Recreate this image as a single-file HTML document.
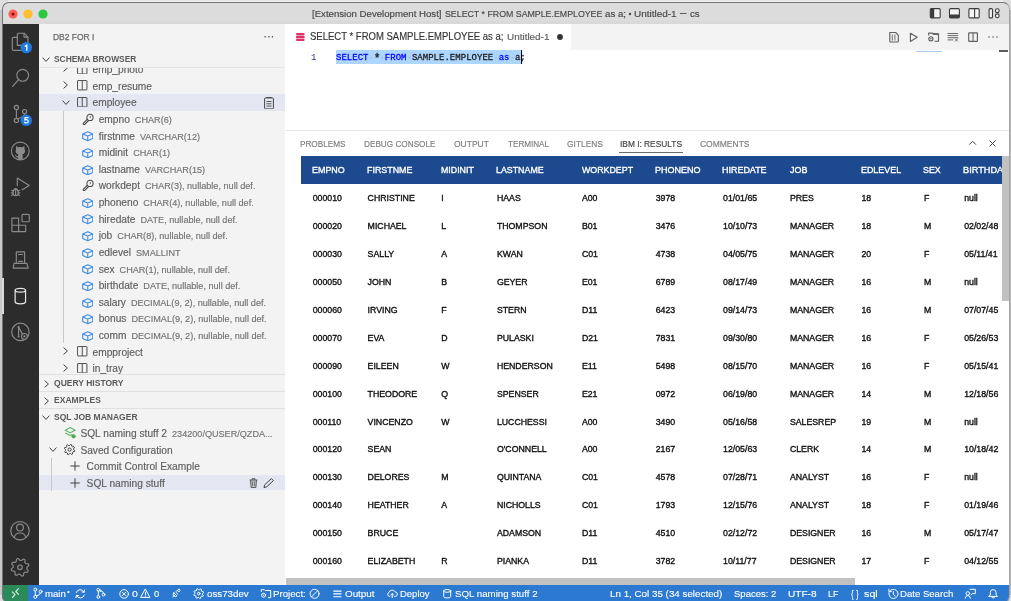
<!DOCTYPE html><html><head><meta charset="utf-8"><style>
html,body{margin:0;padding:0;width:1011px;height:601px;overflow:hidden;background:#e8e8e8;}
.r{position:absolute;}
.t{position:absolute;line-height:0;white-space:nowrap;-webkit-text-stroke:0.15px currentColor;}
body{-webkit-font-smoothing:antialiased;}
#root{position:absolute;left:0;top:0;width:1011px;height:601px;will-change:transform;}
</style></head><body>
<div id="root"><div class="r" style="left:2.00px;top:2.00px;width:1007.30px;height:21.50px;background:#dcdcdc;"></div>
<div class="r" style="left:2.00px;top:20.50px;width:1007.30px;height:3.00px;background:#d9d9d8;"></div>
<svg class="r" style="left:7.80px;top:8.80px;" width="10" height="10" viewBox="0 0 10 10"><circle cx="5" cy="5" r="4.6" fill="#fe5f57"/><circle cx="5" cy="5" r="1.6" fill="#8a0c0c"/></svg>
<svg class="r" style="left:23.00px;top:8.80px;" width="10" height="10" viewBox="0 0 10 10"><circle cx="5" cy="5" r="4.6" fill="#febc2e"/></svg>
<svg class="r" style="left:38.20px;top:8.80px;" width="10" height="10" viewBox="0 0 10 10"><circle cx="5" cy="5" r="4.6" fill="#28c840"/></svg>
<div class="t" style="left:312.33px;top:13.64px;font-size:9.7px;color:#464646;font-weight:normal;font-family:'Liberation Sans', sans-serif;-webkit-text-stroke:0.15px currentColor;transform:scaleX(0.9937);transform-origin:0 0;">[Extension Development Host]</div>
<div class="t" style="left:444.70px;top:13.64px;font-size:9.7px;color:#464646;font-weight:normal;font-family:'Liberation Sans', sans-serif;-webkit-text-stroke:0.15px currentColor;transform:scaleX(0.9087);transform-origin:0 0;">SELECT * FROM SAMPLE.EMPLOYEE</div>
<div class="t" style="left:605.11px;top:13.64px;font-size:9.7px;color:#464646;font-weight:normal;font-family:'Liberation Sans', sans-serif;-webkit-text-stroke:0.15px currentColor;transform:scaleX(1.0006);transform-origin:0 0;">as a;</div>
<svg class="r" style="left:627.70px;top:11.80px;" width="4" height="4" viewBox="0 0 4 4"><circle cx="2" cy="2" r="1.2" fill="#4a4a4a"/></svg>
<div class="t" style="left:634.15px;top:13.64px;font-size:9.7px;color:#464646;font-weight:normal;font-family:'Liberation Sans', sans-serif;-webkit-text-stroke:0.15px currentColor;transform:scaleX(1.0284);transform-origin:0 0;">Untitled-1</div>
<div class="t" style="left:679.80px;top:13.24px;font-size:9.7px;color:#464646;font-weight:normal;font-family:'Liberation Sans', sans-serif;-webkit-text-stroke:0.15px currentColor;transform:scaleX(0.6701);transform-origin:0 0;">—</div>
<div class="t" style="left:690.12px;top:13.64px;font-size:9.7px;color:#464646;font-weight:normal;font-family:'Liberation Sans', sans-serif;-webkit-text-stroke:0.15px currentColor;transform:scaleX(0.9919);transform-origin:0 0;">cs</div>
<svg class="r" style="left:927px;top:6px;" width="16" height="15" viewBox="927 6 16 15"><rect x="930.3" y="8.6" width="9.9" height="9.3" rx="1.1" fill="#f4f4f4" stroke="#3c3c3c" stroke-width="1.1"/><path d="M930.3 9.7 Q930.3 8.6 931.4 8.6 H934.2 V17.9 H931.4 Q930.3 17.9 930.3 16.8 Z" fill="#3c3c3c"/></svg>
<svg class="r" style="left:946px;top:6px;" width="16" height="15" viewBox="946 6 16 15"><rect x="949.5" y="8.6" width="9.9" height="9.3" rx="1.1" fill="#f4f4f4" stroke="#3c3c3c" stroke-width="1.1"/><path d="M949.5 14.6 H959.4 V16.8 Q959.4 17.9 958.3 17.9 H950.6 Q949.5 17.9 949.5 16.8 Z" fill="#3c3c3c"/></svg>
<svg class="r" style="left:966px;top:6px;" width="16" height="15" viewBox="966 6 16 15"><rect x="968.9" y="8.6" width="10.3" height="9.3" rx="1.1" fill="#f4f4f4" stroke="#3c3c3c" stroke-width="1.1"/><line x1="974.6" y1="8.6" x2="974.6" y2="17.9" stroke="#3c3c3c" stroke-width="1.1"/></svg>
<svg class="r" style="left:986px;top:6px;" width="16" height="15" viewBox="986 6 16 15"><rect x="989.1" y="8.6" width="3.4" height="9.3" rx="1" fill="#f4f4f4" stroke="#3c3c3c" stroke-width="1.1"/><circle cx="997.3" cy="10.7" r="1.9" fill="#f4f4f4" stroke="#3c3c3c" stroke-width="1.1"/><circle cx="997.3" cy="15.8" r="1.9" fill="#f4f4f4" stroke="#3c3c3c" stroke-width="1.1"/></svg>
<div class="r" style="left:2.00px;top:23.50px;width:36.80px;height:561.30px;background:#2c2c2c;"></div>
<svg class="r" style="left:8px;top:28px;" width="26" height="28" viewBox="8 28 26 28"><path d="M17.3 37.3 V34.3 Q17.3 33.2 18.4 33.2 H24 L27.9 37.1 V44.2 Q27.9 45.3 26.8 45.3 H21.5" fill="none" stroke="#8b8b8b" stroke-width="1.15" stroke-linejoin="round" stroke-linecap="round"/><path d="M24 33.2 V37.1 H27.9" fill="none" stroke="#8b8b8b" stroke-width="1.15" stroke-linejoin="round" stroke-linecap="round"/><path d="M17.3 37.3 H13.4 Q12.3 37.3 12.3 38.4 V49.2 Q12.3 50.3 13.4 50.3 H21" fill="none" stroke="#8b8b8b" stroke-width="1.15" stroke-linejoin="round" stroke-linecap="round"/><path d="M17.3 37.3 V45.3 H21.5" fill="none" stroke="#8b8b8b" stroke-width="1.15" stroke-linejoin="round" stroke-linecap="round"/></svg>
<svg class="r" style="left:8px;top:28px;" width="26" height="28" viewBox="8 28 26 28"><circle cx="26.3" cy="47.6" r="5.7" fill="#1f7ae0"/><path d="M25.2 46.2 L26.8 45 V50.3" fill="none" stroke="#fff" stroke-width="1.3" stroke-linecap="round" stroke-linejoin="round"/></svg>
<svg class="r" style="left:8px;top:62px;" width="26" height="30" viewBox="8 62 26 30"><circle cx="22.7" cy="75.3" r="5.9" fill="none" stroke="#8b8b8b" stroke-width="1.15" stroke-linejoin="round" stroke-linecap="round"/><path d="M18.6 79.6 L12.6 86.4" fill="none" stroke="#8b8b8b" stroke-width="1.15" stroke-linejoin="round" stroke-linecap="round"/></svg>
<svg class="r" style="left:8px;top:100px;" width="26" height="26" viewBox="8 100 26 26"><circle cx="16.4" cy="107.4" r="2.1" fill="none" stroke="#8b8b8b" stroke-width="1.15" stroke-linejoin="round" stroke-linecap="round"/><circle cx="24.6" cy="111.6" r="2.1" fill="none" stroke="#8b8b8b" stroke-width="1.15" stroke-linejoin="round" stroke-linecap="round"/><circle cx="16.4" cy="120.4" r="2.1" fill="none" stroke="#8b8b8b" stroke-width="1.15" stroke-linejoin="round" stroke-linecap="round"/><path d="M16.4 109.5 V118.3 M24.6 113.7 Q24.6 116.5 17.8 118.7" fill="none" stroke="#8b8b8b" stroke-width="1.15" stroke-linejoin="round" stroke-linecap="round"/></svg>
<svg class="r" style="left:8px;top:100px;" width="26" height="28" viewBox="8 100 26 28"><circle cx="26.3" cy="120.3" r="5.8" fill="#1f7ae0"/><path d="M28.2 117.6 H25.1 L24.8 120.1 Q25.6 119.6 26.5 119.7 Q28.3 119.9 28.3 121.3 Q28.3 123 26.4 123 Q25.2 123 24.6 122.3" fill="none" stroke="#fff" stroke-width="1.2" stroke-linecap="round" stroke-linejoin="round"/></svg>
<svg class="r" style="left:8px;top:138px;" width="26" height="26" viewBox="8 138 26 26"><circle cx="20.3" cy="151" r="8.9" fill="none" stroke="#8b8b8b" stroke-width="1.15" stroke-linejoin="round" stroke-linecap="round"/><path d="M16.4 145.8 L17.9 147.2 Q20.3 146.6 22.7 147.2 L24.2 145.8 Q24.9 147.8 24.6 149.3 Q25.4 150.5 24.9 152.3 Q24.2 154.3 22.2 154.6 Q22.8 155.5 22.7 156.6 V159.6 H17.9 V157.4 Q16.4 157.6 15.5 156 Q15.1 155.2 14.5 154.9 Q15.6 154.7 16.2 155.6 Q16.9 156.4 17.9 156.2 Q17.9 155.2 18.5 154.6 Q16.5 154.3 15.8 152.3 Q15.3 150.5 16.1 149.3 Q15.8 147.8 16.4 145.8 Z" fill="#8b8b8b"/></svg>
<svg class="r" style="left:8px;top:172px;" width="26" height="26" viewBox="8 172 26 26"><path d="M17.3 185.6 V178.1 L29.2 185.4 L22.2 189.8" fill="none" stroke="#8b8b8b" stroke-width="1.15" stroke-linejoin="round" stroke-linecap="round"/><ellipse cx="15.6" cy="192.6" rx="2.7" ry="3.1" fill="none" stroke="#8b8b8b" stroke-width="1.15" stroke-linejoin="round" stroke-linecap="round"/><path d="M14 189.3 Q15.6 187.6 17.2 189.3" fill="none" stroke="#8b8b8b" stroke-width="1.15" stroke-linejoin="round" stroke-linecap="round"/><path d="M11.6 190.3 L13.1 191.1 M11.3 192.8 H12.9 M11.6 195.4 L13.1 194.5 M19.6 190.3 L18.1 191.1 M19.9 192.8 H18.3 M19.6 195.4 L18.1 194.5 M15.6 190.6 V194.8" fill="none" stroke="#8b8b8b" stroke-width="1.15" stroke-linejoin="round" stroke-linecap="round"/></svg>
<svg class="r" style="left:8px;top:210px;" width="26" height="26" viewBox="8 210 26 26"><path d="M11.9 218.8 Q11.9 218.1 12.6 218.1 H18.6 V225.2 H25.7 V230.9 Q25.7 231.6 25 231.6 H12.6 Q11.9 231.6 11.9 230.9 Z M11.9 225.2 H18.6 V231.6" fill="none" stroke="#8b8b8b" stroke-width="1.15" stroke-linejoin="round" stroke-linecap="round"/><rect x="22" y="214.4" width="7.3" height="7.4" rx="1" fill="none" stroke="#8b8b8b" stroke-width="1.15" stroke-linejoin="round" stroke-linecap="round"/></svg>
<svg class="r" style="left:8px;top:246px;" width="26" height="26" viewBox="8 246 26 26"><path d="M16.3 263.4 V252.6 Q16.3 251.9 17 251.9 H23.9 Q24.6 251.9 24.6 252.6 V263.4" fill="none" stroke="#8b8b8b" stroke-width="1.15" stroke-linejoin="round" stroke-linecap="round"/><path d="M18.6 254.5 H22.4 M18.6 261.4 H22.4 M18.6 263.5 H22.4" fill="none" stroke="#8b8b8b" stroke-width="1.15" stroke-linejoin="round" stroke-linecap="round"/><path d="M14 263.4 H26.9 L28.2 268.1 H13.2 Z" fill="none" stroke="#8b8b8b" stroke-width="1.15" stroke-linejoin="round" stroke-linecap="round"/></svg>
<svg class="r" style="left:8px;top:282px;" width="26" height="28" viewBox="8 282 26 28"><ellipse cx="20.35" cy="290.2" rx="5.2" ry="1.9" fill="none" stroke="#e8e8e8" stroke-width="1.2"/><path d="M15.15 290.2 V301.8 Q15.15 303.8 20.35 303.8 Q25.55 303.8 25.55 301.8 V290.2" fill="none" stroke="#e8e8e8" stroke-width="1.2"/></svg>
<svg class="r" style="left:8px;top:318px;" width="26" height="28" viewBox="8 318 26 28"><circle cx="20.4" cy="331.9" r="8.7" fill="none" stroke="#8b8b8b" stroke-width="1.15" stroke-linejoin="round" stroke-linecap="round"/><path d="M18.6 327.2 V336.2 M18.6 327.2 L22.6 334.4" fill="none" stroke="#8b8b8b" stroke-width="1.15" stroke-linejoin="round" stroke-linecap="round"/><circle cx="18.6" cy="327.2" r="1.1" fill="#8b8b8b"/><circle cx="18.6" cy="336.5" r="1" fill="#8b8b8b"/><circle cx="24.4" cy="336.4" r="2.9" fill="#2c2c2c" stroke="#8b8b8b" stroke-width="1.15"/><circle cx="24.4" cy="336.4" r="1.1" fill="#8b8b8b"/></svg>
<svg class="r" style="left:8px;top:518px;" width="26" height="26" viewBox="8 518 26 26"><circle cx="20" cy="530.7" r="9.2" fill="none" stroke="#8b8b8b" stroke-width="1.15" stroke-linejoin="round" stroke-linecap="round"/><circle cx="20" cy="527.6" r="3.4" fill="none" stroke="#8b8b8b" stroke-width="1.15" stroke-linejoin="round" stroke-linecap="round"/><path d="M14.2 537.6 Q15.3 533 20 533 Q24.7 533 25.8 537.6" fill="none" stroke="#8b8b8b" stroke-width="1.15" stroke-linejoin="round" stroke-linecap="round"/></svg>
<svg class="r" style="left:8px;top:554px;" width="26" height="27" viewBox="8 554 26 27"><polygon points="26.77,568.65 28.31,570.74 27.48,572.30 24.88,572.18 23.83,573.04 23.44,575.61 21.76,576.13 20.00,574.20 18.65,574.07 16.56,575.61 15.00,574.78 15.12,572.18 14.26,571.13 11.69,570.74 11.17,569.06 13.10,567.30 13.23,565.95 11.69,563.86 12.52,562.30 15.12,562.42 16.17,561.56 16.56,558.99 18.24,558.47 20.00,560.40 21.35,560.53 23.44,558.99 25.00,559.82 24.88,562.42 25.74,563.47 28.31,563.86 28.83,565.54 26.90,567.30" fill="none" stroke="#8b8b8b" stroke-width="1.15" stroke-linejoin="round" stroke-linecap="round"/><circle cx="20" cy="567.3" r="2.3" fill="none" stroke="#8b8b8b" stroke-width="1.15" stroke-linejoin="round" stroke-linecap="round"/></svg>
<div class="r" style="left:38.80px;top:23.50px;width:246.20px;height:561.30px;background:#f3f3f3;"></div>
<div class="t" style="left:53.12px;top:37.22px;font-size:8.6px;color:#6a6a6a;font-weight:normal;font-family:'Liberation Sans', sans-serif;-webkit-text-stroke:0.25px currentColor;transform:scaleX(0.9865);transform-origin:0 0;">DB2 FOR I</div>
<div class="t" style="left:263.50px;top:36.53px;font-size:10px;color:#424242;font-weight:normal;font-family:'Liberation Sans', sans-serif;-webkit-text-stroke:0.15px currentColor;letter-spacing:0.3px;">···</div>
<svg class="r" style="left:41.70px;top:56.50px;" width="8" height="5" viewBox="0 0 8 5"><path d="M0.6 0.6 L4.0 4.4 L7.4 0.6" fill="none" stroke="#424242" stroke-width="1"/></svg>
<div class="t" style="left:53.95px;top:59.02px;font-size:8.6px;color:#5a5a5a;font-weight:bold;font-family:'Liberation Sans', sans-serif;-webkit-text-stroke:0px currentColor;transform:scaleX(0.9784);transform-origin:0 0;">SCHEMA BROWSER</div>
<div class="r" style="left:38.80px;top:94.00px;width:246.20px;height:16.62px;background:#e4e6f1;"></div>
<div class="r" style="left:0;top:66.5px;width:1011px;height:307.6px;overflow:hidden;"><div class="r" style="left:0;top:-66.5px;width:1011px;height:601px;">
<svg class="r" style="left:63.00px;top:64.48px;" width="5" height="8" viewBox="0 0 5 8"><path d="M0.6 0.6 L4.4 4.0 L0.6 7.4" fill="none" stroke="#424242" stroke-width="1"/></svg>
<svg class="r" style="left:77.00px;top:63.68px;" width="10.5" height="10.5" viewBox="0 0 10.5 10.5"><rect x="0.55" y="0.55" width="9.4" height="9.4" rx="0.4" fill="none" stroke="#505050" stroke-width="1.0"/><line x1="5.25" y1="0.6" x2="5.25" y2="9.9" stroke="#505050" stroke-width="1.0"/></svg>
<div class="t" style="left:92.50px;top:70.15px;font-size:10.2px;color:#5e5e5e;font-weight:normal;font-family:'Liberation Sans', sans-serif;-webkit-text-stroke:0.15px currentColor;">emp_photo</div>
<svg class="r" style="left:63.00px;top:81.10px;" width="5" height="8" viewBox="0 0 5 8"><path d="M0.6 0.6 L4.4 4.0 L0.6 7.4" fill="none" stroke="#424242" stroke-width="1"/></svg>
<svg class="r" style="left:77.00px;top:80.30px;" width="10.5" height="10.5" viewBox="0 0 10.5 10.5"><rect x="0.55" y="0.55" width="9.4" height="9.4" rx="0.4" fill="none" stroke="#505050" stroke-width="1.0"/><line x1="5.25" y1="0.6" x2="5.25" y2="9.9" stroke="#505050" stroke-width="1.0"/></svg>
<div class="t" style="left:92.50px;top:86.77px;font-size:10.2px;color:#5e5e5e;font-weight:normal;font-family:'Liberation Sans', sans-serif;-webkit-text-stroke:0.15px currentColor;">emp_resume</div>
<svg class="r" style="left:61.50px;top:100.42px;" width="8" height="5" viewBox="0 0 8 5"><path d="M0.6 0.6 L4.0 4.4 L7.4 0.6" fill="none" stroke="#424242" stroke-width="1"/></svg>
<svg class="r" style="left:77.00px;top:96.92px;" width="10.5" height="10.5" viewBox="0 0 10.5 10.5"><rect x="0.55" y="0.55" width="9.4" height="9.4" rx="0.4" fill="none" stroke="#505050" stroke-width="1.0"/><line x1="5.25" y1="0.6" x2="5.25" y2="9.9" stroke="#505050" stroke-width="1.0"/></svg>
<div class="t" style="left:92.50px;top:103.39px;font-size:10.2px;color:#5e5e5e;font-weight:normal;font-family:'Liberation Sans', sans-serif;-webkit-text-stroke:0.15px currentColor;">employee</div>
<svg class="r" style="left:263.80px;top:96.60px;" width="10" height="12.5" viewBox="0 0 10 12.5"><rect x="0.6" y="0.9" width="8.8" height="11" rx="1" fill="none" stroke="#424242" stroke-width="1"/><path d="M2.5 0.6 h5 M2.5 4.5 h5 M2.5 6.8 h5 M2.5 9.1 h5" stroke="#424242" stroke-width="0.9"/></svg>
<svg class="r" style="left:81.50px;top:112.74px;" width="12" height="12" viewBox="0 0 12 12"><path d="M6.2 6.6 L2.1 10.7" stroke="#4a4a4a" stroke-width="2.9" stroke-linecap="round"/><path d="M6.2 6.6 L2.1 10.7" stroke="#f3f3f3" stroke-width="0.9" stroke-linecap="round"/><circle cx="8" cy="4.4" r="3.1" fill="#f3f3f3" stroke="#4a4a4a" stroke-width="1.05"/><circle cx="8.3" cy="4.1" r="0.75" fill="#4a4a4a"/></svg>
<div class="t" style="left:98.7px;top:120.01px;font-size:10.2px;color:#5e5e5e;font-family:'Liberation Sans', sans-serif;">empno<span style="font-size:9.12px;color:#737373;margin-left:5px;">CHAR(6)</span></div>
<svg class="r" style="left:81.80px;top:131.36px;" width="11.5" height="10.5" viewBox="0 0 11.5 10.5"><path d="M5.75 0.7 L10.8 2.9 V7.5 L5.75 9.8 L0.7 7.5 V2.9 Z M0.7 2.9 L5.75 5.1 L10.8 2.9 M5.75 5.1 V9.8" fill="none" stroke="#3f8de0" stroke-width="1.1" stroke-linejoin="round"/></svg>
<div class="t" style="left:98.7px;top:136.63px;font-size:10.2px;color:#5e5e5e;font-family:'Liberation Sans', sans-serif;">firstnme<span style="font-size:9.12px;color:#737373;margin-left:5px;">VARCHAR(12)</span></div>
<svg class="r" style="left:81.80px;top:147.98px;" width="11.5" height="10.5" viewBox="0 0 11.5 10.5"><path d="M5.75 0.7 L10.8 2.9 V7.5 L5.75 9.8 L0.7 7.5 V2.9 Z M0.7 2.9 L5.75 5.1 L10.8 2.9 M5.75 5.1 V9.8" fill="none" stroke="#3f8de0" stroke-width="1.1" stroke-linejoin="round"/></svg>
<div class="t" style="left:98.7px;top:153.25px;font-size:10.2px;color:#5e5e5e;font-family:'Liberation Sans', sans-serif;">midinit<span style="font-size:9.12px;color:#737373;margin-left:5px;">CHAR(1)</span></div>
<svg class="r" style="left:81.80px;top:164.60px;" width="11.5" height="10.5" viewBox="0 0 11.5 10.5"><path d="M5.75 0.7 L10.8 2.9 V7.5 L5.75 9.8 L0.7 7.5 V2.9 Z M0.7 2.9 L5.75 5.1 L10.8 2.9 M5.75 5.1 V9.8" fill="none" stroke="#3f8de0" stroke-width="1.1" stroke-linejoin="round"/></svg>
<div class="t" style="left:98.7px;top:169.87px;font-size:10.2px;color:#5e5e5e;font-family:'Liberation Sans', sans-serif;">lastname<span style="font-size:9.12px;color:#737373;margin-left:5px;">VARCHAR(15)</span></div>
<svg class="r" style="left:81.50px;top:179.22px;" width="12" height="12" viewBox="0 0 12 12"><path d="M6.2 6.6 L2.1 10.7" stroke="#4a4a4a" stroke-width="2.9" stroke-linecap="round"/><path d="M6.2 6.6 L2.1 10.7" stroke="#f3f3f3" stroke-width="0.9" stroke-linecap="round"/><circle cx="8" cy="4.4" r="3.1" fill="#f3f3f3" stroke="#4a4a4a" stroke-width="1.05"/><circle cx="8.3" cy="4.1" r="0.75" fill="#4a4a4a"/></svg>
<div class="t" style="left:98.7px;top:186.49px;font-size:10.2px;color:#5e5e5e;font-family:'Liberation Sans', sans-serif;">workdept<span style="font-size:9.12px;color:#737373;margin-left:5px;">CHAR(3), nullable, null def.</span></div>
<svg class="r" style="left:81.80px;top:197.84px;" width="11.5" height="10.5" viewBox="0 0 11.5 10.5"><path d="M5.75 0.7 L10.8 2.9 V7.5 L5.75 9.8 L0.7 7.5 V2.9 Z M0.7 2.9 L5.75 5.1 L10.8 2.9 M5.75 5.1 V9.8" fill="none" stroke="#3f8de0" stroke-width="1.1" stroke-linejoin="round"/></svg>
<div class="t" style="left:98.7px;top:203.11px;font-size:10.2px;color:#5e5e5e;font-family:'Liberation Sans', sans-serif;">phoneno<span style="font-size:9.12px;color:#737373;margin-left:5px;">CHAR(4), nullable, null def.</span></div>
<svg class="r" style="left:81.80px;top:214.46px;" width="11.5" height="10.5" viewBox="0 0 11.5 10.5"><path d="M5.75 0.7 L10.8 2.9 V7.5 L5.75 9.8 L0.7 7.5 V2.9 Z M0.7 2.9 L5.75 5.1 L10.8 2.9 M5.75 5.1 V9.8" fill="none" stroke="#3f8de0" stroke-width="1.1" stroke-linejoin="round"/></svg>
<div class="t" style="left:98.7px;top:219.73px;font-size:10.2px;color:#5e5e5e;font-family:'Liberation Sans', sans-serif;">hiredate<span style="font-size:9.12px;color:#737373;margin-left:5px;">DATE, nullable, null def.</span></div>
<svg class="r" style="left:81.80px;top:231.08px;" width="11.5" height="10.5" viewBox="0 0 11.5 10.5"><path d="M5.75 0.7 L10.8 2.9 V7.5 L5.75 9.8 L0.7 7.5 V2.9 Z M0.7 2.9 L5.75 5.1 L10.8 2.9 M5.75 5.1 V9.8" fill="none" stroke="#3f8de0" stroke-width="1.1" stroke-linejoin="round"/></svg>
<div class="t" style="left:98.7px;top:236.35px;font-size:10.2px;color:#5e5e5e;font-family:'Liberation Sans', sans-serif;">job<span style="font-size:9.12px;color:#737373;margin-left:5px;">CHAR(8), nullable, null def.</span></div>
<svg class="r" style="left:81.80px;top:247.70px;" width="11.5" height="10.5" viewBox="0 0 11.5 10.5"><path d="M5.75 0.7 L10.8 2.9 V7.5 L5.75 9.8 L0.7 7.5 V2.9 Z M0.7 2.9 L5.75 5.1 L10.8 2.9 M5.75 5.1 V9.8" fill="none" stroke="#3f8de0" stroke-width="1.1" stroke-linejoin="round"/></svg>
<div class="t" style="left:98.7px;top:252.97px;font-size:10.2px;color:#5e5e5e;font-family:'Liberation Sans', sans-serif;">edlevel<span style="font-size:9.12px;color:#737373;margin-left:5px;">SMALLINT</span></div>
<svg class="r" style="left:81.80px;top:264.32px;" width="11.5" height="10.5" viewBox="0 0 11.5 10.5"><path d="M5.75 0.7 L10.8 2.9 V7.5 L5.75 9.8 L0.7 7.5 V2.9 Z M0.7 2.9 L5.75 5.1 L10.8 2.9 M5.75 5.1 V9.8" fill="none" stroke="#3f8de0" stroke-width="1.1" stroke-linejoin="round"/></svg>
<div class="t" style="left:98.7px;top:269.59px;font-size:10.2px;color:#5e5e5e;font-family:'Liberation Sans', sans-serif;">sex<span style="font-size:9.12px;color:#737373;margin-left:5px;">CHAR(1), nullable, null def.</span></div>
<svg class="r" style="left:81.80px;top:280.94px;" width="11.5" height="10.5" viewBox="0 0 11.5 10.5"><path d="M5.75 0.7 L10.8 2.9 V7.5 L5.75 9.8 L0.7 7.5 V2.9 Z M0.7 2.9 L5.75 5.1 L10.8 2.9 M5.75 5.1 V9.8" fill="none" stroke="#3f8de0" stroke-width="1.1" stroke-linejoin="round"/></svg>
<div class="t" style="left:98.7px;top:286.21px;font-size:10.2px;color:#5e5e5e;font-family:'Liberation Sans', sans-serif;">birthdate<span style="font-size:9.12px;color:#737373;margin-left:5px;">DATE, nullable, null def.</span></div>
<svg class="r" style="left:81.80px;top:297.56px;" width="11.5" height="10.5" viewBox="0 0 11.5 10.5"><path d="M5.75 0.7 L10.8 2.9 V7.5 L5.75 9.8 L0.7 7.5 V2.9 Z M0.7 2.9 L5.75 5.1 L10.8 2.9 M5.75 5.1 V9.8" fill="none" stroke="#3f8de0" stroke-width="1.1" stroke-linejoin="round"/></svg>
<div class="t" style="left:98.7px;top:302.83px;font-size:10.2px;color:#5e5e5e;font-family:'Liberation Sans', sans-serif;">salary<span style="font-size:9.12px;color:#737373;margin-left:5px;">DECIMAL(9, 2), nullable, null def.</span></div>
<svg class="r" style="left:81.80px;top:314.18px;" width="11.5" height="10.5" viewBox="0 0 11.5 10.5"><path d="M5.75 0.7 L10.8 2.9 V7.5 L5.75 9.8 L0.7 7.5 V2.9 Z M0.7 2.9 L5.75 5.1 L10.8 2.9 M5.75 5.1 V9.8" fill="none" stroke="#3f8de0" stroke-width="1.1" stroke-linejoin="round"/></svg>
<div class="t" style="left:98.7px;top:319.45px;font-size:10.2px;color:#5e5e5e;font-family:'Liberation Sans', sans-serif;">bonus<span style="font-size:9.12px;color:#737373;margin-left:5px;">DECIMAL(9, 2), nullable, null def.</span></div>
<svg class="r" style="left:81.80px;top:330.80px;" width="11.5" height="10.5" viewBox="0 0 11.5 10.5"><path d="M5.75 0.7 L10.8 2.9 V7.5 L5.75 9.8 L0.7 7.5 V2.9 Z M0.7 2.9 L5.75 5.1 L10.8 2.9 M5.75 5.1 V9.8" fill="none" stroke="#3f8de0" stroke-width="1.1" stroke-linejoin="round"/></svg>
<div class="t" style="left:98.7px;top:336.07px;font-size:10.2px;color:#5e5e5e;font-family:'Liberation Sans', sans-serif;">comm<span style="font-size:9.12px;color:#737373;margin-left:5px;">DECIMAL(9, 2), nullable, null def.</span></div>
<div class="r" style="left:63.00px;top:110.62px;width:0.80px;height:232.68px;background:#c9c9c9;"></div>
<svg class="r" style="left:63.00px;top:347.02px;" width="5" height="8" viewBox="0 0 5 8"><path d="M0.6 0.6 L4.4 4.0 L0.6 7.4" fill="none" stroke="#424242" stroke-width="1"/></svg>
<svg class="r" style="left:77.00px;top:346.22px;" width="10.5" height="10.5" viewBox="0 0 10.5 10.5"><rect x="0.55" y="0.55" width="9.4" height="9.4" rx="0.4" fill="none" stroke="#505050" stroke-width="1.0"/><line x1="5.25" y1="0.6" x2="5.25" y2="9.9" stroke="#505050" stroke-width="1.0"/></svg>
<div class="t" style="left:92.50px;top:352.69px;font-size:10.2px;color:#5e5e5e;font-weight:normal;font-family:'Liberation Sans', sans-serif;-webkit-text-stroke:0.15px currentColor;">empproject</div>
<svg class="r" style="left:63.00px;top:363.64px;" width="5" height="8" viewBox="0 0 5 8"><path d="M0.6 0.6 L4.4 4.0 L0.6 7.4" fill="none" stroke="#424242" stroke-width="1"/></svg>
<svg class="r" style="left:77.00px;top:362.84px;" width="10.5" height="10.5" viewBox="0 0 10.5 10.5"><rect x="0.55" y="0.55" width="9.4" height="9.4" rx="0.4" fill="none" stroke="#505050" stroke-width="1.0"/><line x1="5.25" y1="0.6" x2="5.25" y2="9.9" stroke="#505050" stroke-width="1.0"/></svg>
<div class="t" style="left:92.50px;top:369.31px;font-size:10.2px;color:#5e5e5e;font-weight:normal;font-family:'Liberation Sans', sans-serif;-webkit-text-stroke:0.15px currentColor;">in_tray</div>
</div></div>
<div class="r" style="left:38.80px;top:66.50px;width:246.20px;height:1.20px;background:linear-gradient(#dcdcdc,#ececec);"></div>
<div class="r" style="left:38.80px;top:374.10px;width:246.20px;height:0.80px;background:#e1e1e1;"></div>
<svg class="r" style="left:43.80px;top:380.10px;" width="5" height="8" viewBox="0 0 5 8"><path d="M0.6 0.6 L4.4 4.0 L0.6 7.4" fill="none" stroke="#424242" stroke-width="1"/></svg>
<div class="t" style="left:54.10px;top:383.15px;font-size:8.5px;color:#5a5a5a;font-weight:bold;font-family:'Liberation Sans', sans-serif;-webkit-text-stroke:0px currentColor;">QUERY HISTORY</div>
<div class="r" style="left:38.80px;top:391.20px;width:246.20px;height:0.80px;background:#e1e1e1;"></div>
<svg class="r" style="left:43.80px;top:397.20px;" width="5" height="8" viewBox="0 0 5 8"><path d="M0.6 0.6 L4.4 4.0 L0.6 7.4" fill="none" stroke="#424242" stroke-width="1"/></svg>
<div class="t" style="left:54.10px;top:400.25px;font-size:8.5px;color:#5a5a5a;font-weight:bold;font-family:'Liberation Sans', sans-serif;-webkit-text-stroke:0px currentColor;">EXAMPLES</div>
<div class="r" style="left:38.80px;top:407.90px;width:246.20px;height:0.80px;background:#e1e1e1;"></div>
<svg class="r" style="left:41.70px;top:414.50px;" width="8" height="5" viewBox="0 0 8 5"><path d="M0.6 0.6 L4.0 4.4 L7.4 0.6" fill="none" stroke="#424242" stroke-width="1"/></svg>
<div class="t" style="left:54.10px;top:416.95px;font-size:8.5px;color:#5a5a5a;font-weight:bold;font-family:'Liberation Sans', sans-serif;-webkit-text-stroke:0px currentColor;">SQL JOB MANAGER</div>
<svg class="r" style="left:62px;top:424px;" width="18" height="18" viewBox="62 424 18 18"><path d="M70.2 427.6 L75.2 430.2 L70.2 432.8 L65.2 430.2 Z M65.2 432.9 L70.2 435.5 L72.2 434.5" fill="none" stroke="#5fb865" stroke-width="1.1" stroke-linejoin="round"/><circle cx="73.6" cy="436.3" r="2.1" fill="#4caa52"/></svg>
<div class="t" style="left:80.4px;top:434.07px;font-size:10.2px;color:#5e5e5e;font-family:'Liberation Sans', sans-serif;">SQL naming stuff 2<span style="font-size:9.1px;color:#737373;margin-left:5px;">234200/QUSER/QZDA...</span></div>
<svg class="r" style="left:49.20px;top:446.92px;" width="8" height="5" viewBox="0 0 8 5"><path d="M0.6 0.6 L4.0 4.4 L7.4 0.6" fill="none" stroke="#424242" stroke-width="1"/></svg>
<svg class="r" style="left:64.10px;top:443.82px;" width="11.5" height="11.5" viewBox="0 0 11.5 11.5"><polygon points="9.60,5.60 10.80,6.63 10.50,7.63 8.93,7.82 8.43,8.43 8.54,10.01 7.63,10.50 6.38,9.52 5.60,9.60 4.57,10.80 3.57,10.50 3.38,8.93 2.77,8.43 1.19,8.54 0.70,7.63 1.68,6.38 1.60,5.60 0.40,4.57 0.70,3.57 2.27,3.38 2.77,2.77 2.66,1.19 3.57,0.70 4.82,1.68 5.60,1.60 6.63,0.40 7.63,0.70 7.82,2.27 8.43,2.77 10.01,2.66 10.50,3.57 9.52,4.82" fill="none" stroke="#424242" stroke-width="1" stroke-linejoin="round"/><circle cx="5.6" cy="5.6" r="1.6" fill="none" stroke="#424242" stroke-width="1"/></svg>
<div class="t" style="left:80.40px;top:450.69px;font-size:10.2px;color:#5e5e5e;font-weight:normal;font-family:'Liberation Sans', sans-serif;-webkit-text-stroke:0.15px currentColor;">Saved Configuration</div>
<div class="r" style="left:38.80px;top:474.60px;width:246.20px;height:15.90px;background:#e4e6f1;"></div>
<div class="r" style="left:51.20px;top:458.24px;width:0.80px;height:33.24px;background:#c9c9c9;"></div>
<svg class="r" style="left:70.40px;top:461.24px;" width="10" height="10" viewBox="0 0 10 10"><path d="M5 0.3 V9.7 M0.3 5 H9.7" stroke="#424242" stroke-width="1"/></svg>
<div class="t" style="left:86.60px;top:467.31px;font-size:10.2px;color:#5e5e5e;font-weight:normal;font-family:'Liberation Sans', sans-serif;-webkit-text-stroke:0.15px currentColor;">Commit Control Example</div>
<svg class="r" style="left:70.40px;top:477.86px;" width="10" height="10" viewBox="0 0 10 10"><path d="M5 0.3 V9.7 M0.3 5 H9.7" stroke="#424242" stroke-width="1"/></svg>
<div class="t" style="left:86.60px;top:483.93px;font-size:10.2px;color:#5e5e5e;font-weight:normal;font-family:'Liberation Sans', sans-serif;-webkit-text-stroke:0.15px currentColor;">SQL naming stuff</div>
<svg class="r" style="left:248.60px;top:478.00px;" width="9" height="10" viewBox="0 0 9 10"><path d="M0.5 2 h8 M3 2 v-1.3 h3 v1.3 M1.5 2 l0.6 7.5 h4.8 l0.6-7.5" fill="#777" fill-opacity="0.35" stroke="#555" stroke-width="0.9"/><path d="M3.5 3.5 v4.5 M5.5 3.5 v4.5" stroke="#555" stroke-width="0.7"/></svg>
<svg class="r" style="left:262.90px;top:477.80px;" width="11.5" height="10.5" viewBox="0 0 11.5 10.5"><path d="M1 9.5 l0.6-2.6 l6.8-6.3 l2 2 l-6.8 6.3 z" fill="none" stroke="#424242" stroke-width="1"/></svg>
<div class="r" style="left:285.00px;top:23.50px;width:724.30px;height:26.80px;background:#f3f3f3;"></div>
<div class="r" style="left:285.00px;top:50.30px;width:724.30px;height:79.70px;background:#ffffff;"></div>
<div class="r" style="left:285.00px;top:23.50px;width:285.50px;height:26.80px;background:#ffffff;"></div>
<svg class="r" style="left:296.40px;top:33.00px;" width="8.6" height="8" viewBox="0 0 8.6 8"><rect x="0" y="0" width="8.6" height="2.4" rx="1.1" fill="#de3268"/><rect x="0" y="2.9" width="8.6" height="2.3" rx="0.4" fill="#de3268"/><rect x="0" y="5.7" width="8.6" height="2.3" rx="1.1" fill="#de3268"/></svg>
<div class="t" style="left:309.57px;top:37.20px;font-size:10.4px;color:#333333;font-weight:normal;font-family:'Liberation Sans', sans-serif;-webkit-text-stroke:0.15px currentColor;transform:scaleX(0.9158);transform-origin:0 0;">SELECT * FROM SAMPLE.EMPLOYEE as a;</div>
<div class="t" style="left:507.36px;top:37.41px;font-size:9.2px;color:#5c5c5c;font-weight:normal;font-family:'Liberation Sans', sans-serif;-webkit-text-stroke:0.15px currentColor;transform:scaleX(1.0791);transform-origin:0 0;">Untitled-1</div>
<svg class="r" style="left:557.00px;top:34.00px;" width="6" height="6" viewBox="0 0 6 6"><circle cx="3" cy="3" r="2.9" fill="#333"/></svg>
<svg class="r" style="left:886px;top:29px;" width="16" height="16" viewBox="886 29 16 16"><path d="M889.8 32.5 H895.6 L898.3 35.2 V41.3 Q898.3 42 897.6 42 H890.5 Q889.8 42 889.8 41.3 Z" fill="none" stroke="#606060" stroke-width="1.15" stroke-linejoin="round"/><path d="M892.3 34.6 V36.3 M892.3 37.5 V40.6 M894.9 34.6 V38.3 M894.9 39.5 V40.6" stroke="#606060" stroke-width="0.9"/><path d="M891.5 36.9 H893.1 M894.1 38.9 H895.7" stroke="#606060" stroke-width="0.8"/></svg>
<svg class="r" style="left:906px;top:29px;" width="14" height="16" viewBox="906 29 14 16"><path d="M910.4 33.2 L917.2 37.3 L910.4 41.4 Z" fill="none" stroke="#606060" stroke-width="1.15" stroke-linejoin="round"/></svg>
<svg class="r" style="left:925px;top:29px;" width="17" height="16" viewBox="925 29 17 16"><path d="M928.7 35.6 V33.1 H932.4 L933.4 34.1 H938.5 V41.2 H934.4" fill="none" stroke="#606060" stroke-width="1.15" stroke-linejoin="round"/><rect x="932.6" y="33.1" width="5.9" height="1.6" fill="#606060"/><circle cx="930.9" cy="38.8" r="2.1" fill="none" stroke="#606060" stroke-width="1.15" stroke-linejoin="round"/><circle cx="930.9" cy="38.8" r="0.8" fill="#606060"/></svg>
<svg class="r" style="left:945px;top:29px;" width="16" height="16" viewBox="945 29 16 16"><path d="M947.6 33.5 H958.2 M947.6 35.6 H958.2 M947.6 37.7 H958.2 M947.6 39.9 H953.2 M955 38.6 L957.8 41.4 M957.8 38.6 L955 41.4" stroke="#606060" stroke-width="0.95"/></svg>
<svg class="r" style="left:965px;top:29px;" width="16" height="16" viewBox="965 29 16 16"><rect x="968.7" y="32.9" width="8.7" height="8.4" rx="0.6" fill="none" stroke="#606060" stroke-width="1.15"/><line x1="973.05" y1="32.9" x2="973.05" y2="41.3" stroke="#606060" stroke-width="1.1"/></svg>
<svg class="r" style="left:988.40px;top:36.30px;" width="2" height="2" viewBox="0 0 2 2"><circle cx="1" cy="1" r="0.8" fill="#606060"/></svg>
<svg class="r" style="left:992.20px;top:36.30px;" width="2" height="2" viewBox="0 0 2 2"><circle cx="1" cy="1" r="0.8" fill="#606060"/></svg>
<svg class="r" style="left:996.00px;top:36.30px;" width="2" height="2" viewBox="0 0 2 2"><circle cx="1" cy="1" r="0.8" fill="#606060"/></svg>
<div class="r" style="left:916.30px;top:50.50px;width:25.60px;height:1.20px;background:#a8cdf5;"></div>
<div class="r" style="left:999.20px;top:50.40px;width:9.00px;height:1.30px;background:#5a5a5a;"></div>
<div class="t" style="left:311.00px;top:57.67px;font-size:9.9px;color:#2b3f78;font-weight:normal;font-family:'Liberation Mono', monospace;-webkit-text-stroke:0px currentColor;transform:scaleX(0.9145);transform-origin:0 0;">1</div>
<div class="r" style="left:336.00px;top:50.20px;width:185.80px;height:13.50px;background:#add6ff;"></div>
<div class="t" style="left:336.20px;top:57.57px;font-size:9.9px;color:#1a1a1a;font-weight:normal;font-family:'Liberation Mono', monospace;-webkit-text-stroke:0.28px currentColor;transform:scaleX(0.9145);transform-origin:0 0;"><span style="color:#0000ff">SELECT</span><span style="color:#98a9c4;-webkit-text-stroke:0">·</span><span style="display:inline-block;transform:translateY(1.6px) scale(1.25)">*</span><span style="color:#98a9c4;-webkit-text-stroke:0">·</span><span style="color:#0000ff">FROM</span><span style="color:#98a9c4;-webkit-text-stroke:0">·</span>SAMPLE.EMPLOYEE<span style="color:#98a9c4;-webkit-text-stroke:0">·</span><span style="color:#0000ff">as</span><span style="color:#98a9c4;-webkit-text-stroke:0">·</span>a;</div>
<div class="r" style="left:521.30px;top:49.80px;width:1.20px;height:14.30px;background:#000000;"></div>
<div class="r" style="left:285.00px;top:130.00px;width:724.30px;height:454.80px;background:#ffffff;"></div>
<div class="r" style="left:285.00px;top:129.80px;width:724.30px;height:0.80px;background:#e5e5e5;"></div>
<div class="t" style="left:300.14px;top:144.29px;font-size:8.7px;color:#7d7d7d;font-weight:normal;font-family:'Liberation Sans', sans-serif;-webkit-text-stroke:0.15px currentColor;transform:scaleX(0.9420);transform-origin:0 0;">PROBLEMS</div>
<div class="t" style="left:364.04px;top:144.29px;font-size:8.7px;color:#7d7d7d;font-weight:normal;font-family:'Liberation Sans', sans-serif;-webkit-text-stroke:0.15px currentColor;transform:scaleX(0.9436);transform-origin:0 0;">DEBUG CONSOLE</div>
<div class="t" style="left:453.52px;top:144.29px;font-size:8.7px;color:#7d7d7d;font-weight:normal;font-family:'Liberation Sans', sans-serif;-webkit-text-stroke:0.15px currentColor;transform:scaleX(0.9775);transform-origin:0 0;">OUTPUT</div>
<div class="t" style="left:507.54px;top:144.29px;font-size:8.7px;color:#7d7d7d;font-weight:normal;font-family:'Liberation Sans', sans-serif;-webkit-text-stroke:0.15px currentColor;transform:scaleX(0.9347);transform-origin:0 0;">TERMINAL</div>
<div class="t" style="left:566.98px;top:144.29px;font-size:8.7px;color:#7d7d7d;font-weight:normal;font-family:'Liberation Sans', sans-serif;-webkit-text-stroke:0.15px currentColor;transform:scaleX(0.9679);transform-origin:0 0;">GITLENS</div>
<div class="t" style="left:619.85px;top:144.29px;font-size:8.7px;color:#424242;font-weight:normal;font-family:'Liberation Sans', sans-serif;-webkit-text-stroke:0.15px currentColor;transform:scaleX(0.9602);transform-origin:0 0;">IBM I: RESULTS</div>
<div class="t" style="left:699.58px;top:144.29px;font-size:8.7px;color:#7d7d7d;font-weight:normal;font-family:'Liberation Sans', sans-serif;-webkit-text-stroke:0.15px currentColor;transform:scaleX(0.9761);transform-origin:0 0;">COMMENTS</div>
<div class="r" style="left:619.00px;top:152.20px;width:64.00px;height:1.10px;background:#6a6a6a;"></div>
<svg class="r" style="left:966px;top:138px;" width="14" height="10" viewBox="966 138 14 10"><path d="M969.3 144.6 L972.6 141.2 L975.9 144.6" fill="none" stroke="#424242" stroke-width="1"/></svg>
<svg class="r" style="left:989.00px;top:140.00px;" width="7" height="7" viewBox="0 0 7 7"><path d="M0.5 0.5 L6.5 6.5 M6.5 0.5 L0.5 6.5" stroke="#424242" stroke-width="1"/></svg>
<div class="r" style="left:301.00px;top:156.00px;width:701.40px;height:28.00px;background:#1d4a8e;"></div>
<div class="r" style="left:0;top:0;width:1002.4px;height:601px;overflow:hidden;">
<div class="t" style="left:311.99px;top:170.11px;font-size:9.5px;color:#ffffff;font-weight:normal;font-family:'Liberation Sans', sans-serif;-webkit-text-stroke:0.35px currentColor;transform:scaleX(0.9396);transform-origin:0 0;">EMPNO</div>
<div class="t" style="left:366.99px;top:170.11px;font-size:9.5px;color:#ffffff;font-weight:normal;font-family:'Liberation Sans', sans-serif;-webkit-text-stroke:0.35px currentColor;transform:scaleX(0.9345);transform-origin:0 0;">FIRSTNME</div>
<div class="t" style="left:440.90px;top:170.11px;font-size:9.5px;color:#ffffff;font-weight:normal;font-family:'Liberation Sans', sans-serif;-webkit-text-stroke:0.35px currentColor;transform:scaleX(0.9276);transform-origin:0 0;">MIDINIT</div>
<div class="t" style="left:496.29px;top:170.11px;font-size:9.5px;color:#ffffff;font-weight:normal;font-family:'Liberation Sans', sans-serif;-webkit-text-stroke:0.35px currentColor;transform:scaleX(0.9308);transform-origin:0 0;">LASTNAME</div>
<div class="t" style="left:581.86px;top:170.11px;font-size:9.5px;color:#ffffff;font-weight:normal;font-family:'Liberation Sans', sans-serif;-webkit-text-stroke:0.35px currentColor;transform:scaleX(0.9300);transform-origin:0 0;">WORKDEPT</div>
<div class="t" style="left:655.08px;top:170.11px;font-size:9.5px;color:#ffffff;font-weight:normal;font-family:'Liberation Sans', sans-serif;-webkit-text-stroke:0.35px currentColor;transform:scaleX(0.9459);transform-origin:0 0;">PHONENO</div>
<div class="t" style="left:722.38px;top:170.11px;font-size:9.5px;color:#ffffff;font-weight:normal;font-family:'Liberation Sans', sans-serif;-webkit-text-stroke:0.35px currentColor;transform:scaleX(0.9422);transform-origin:0 0;">HIREDATE</div>
<div class="t" style="left:789.67px;top:170.11px;font-size:9.5px;color:#ffffff;font-weight:normal;font-family:'Liberation Sans', sans-serif;-webkit-text-stroke:0.35px currentColor;transform:scaleX(0.9406);transform-origin:0 0;">JOB</div>
<div class="t" style="left:860.59px;top:170.11px;font-size:9.5px;color:#ffffff;font-weight:normal;font-family:'Liberation Sans', sans-serif;-webkit-text-stroke:0.35px currentColor;transform:scaleX(0.9375);transform-origin:0 0;">EDLEVEL</div>
<div class="t" style="left:923.40px;top:170.11px;font-size:9.5px;color:#ffffff;font-weight:normal;font-family:'Liberation Sans', sans-serif;-webkit-text-stroke:0.35px currentColor;transform:scaleX(0.9302);transform-origin:0 0;">SEX</div>
<div class="t" style="left:963.37px;top:170.11px;font-size:9.5px;color:#ffffff;font-weight:normal;font-family:'Liberation Sans', sans-serif;-webkit-text-stroke:0.35px currentColor;transform:scaleX(0.9668);transform-origin:0 0;">BIRTHDATE</div>
<div class="t" style="left:312.70px;top:198.17px;font-size:8.75px;color:#111111;font-weight:normal;font-family:'Liberation Sans', sans-serif;-webkit-text-stroke:0.35px currentColor;">000010</div>
<div class="t" style="left:367.60px;top:198.17px;font-size:8.75px;color:#111111;font-weight:normal;font-family:'Liberation Sans', sans-serif;-webkit-text-stroke:0.35px currentColor;">CHRISTINE</div>
<div class="t" style="left:441.30px;top:198.17px;font-size:8.75px;color:#111111;font-weight:normal;font-family:'Liberation Sans', sans-serif;-webkit-text-stroke:0.35px currentColor;">I</div>
<div class="t" style="left:496.90px;top:198.17px;font-size:8.75px;color:#111111;font-weight:normal;font-family:'Liberation Sans', sans-serif;-webkit-text-stroke:0.35px currentColor;">HAAS</div>
<div class="t" style="left:581.90px;top:198.17px;font-size:8.75px;color:#111111;font-weight:normal;font-family:'Liberation Sans', sans-serif;-webkit-text-stroke:0.35px currentColor;">A00</div>
<div class="t" style="left:655.70px;top:198.17px;font-size:8.75px;color:#111111;font-weight:normal;font-family:'Liberation Sans', sans-serif;-webkit-text-stroke:0.35px currentColor;">3978</div>
<div class="t" style="left:723.10px;top:198.17px;font-size:8.75px;color:#111111;font-weight:normal;font-family:'Liberation Sans', sans-serif;-webkit-text-stroke:0.35px currentColor;">01/01/65</div>
<div class="t" style="left:789.90px;top:198.17px;font-size:8.75px;color:#111111;font-weight:normal;font-family:'Liberation Sans', sans-serif;-webkit-text-stroke:0.35px currentColor;">PRES</div>
<div class="t" style="left:861.40px;top:198.17px;font-size:8.75px;color:#111111;font-weight:normal;font-family:'Liberation Sans', sans-serif;-webkit-text-stroke:0.35px currentColor;">18</div>
<div class="t" style="left:923.90px;top:198.17px;font-size:8.75px;color:#111111;font-weight:normal;font-family:'Liberation Sans', sans-serif;-webkit-text-stroke:0.35px currentColor;">F</div>
<div class="t" style="left:964.20px;top:198.17px;font-size:8.75px;color:#111111;font-weight:normal;font-family:'Liberation Sans', sans-serif;-webkit-text-stroke:0.35px currentColor;">null</div>
<div class="t" style="left:312.70px;top:226.09px;font-size:8.75px;color:#111111;font-weight:normal;font-family:'Liberation Sans', sans-serif;-webkit-text-stroke:0.35px currentColor;">000020</div>
<div class="t" style="left:367.60px;top:226.09px;font-size:8.75px;color:#111111;font-weight:normal;font-family:'Liberation Sans', sans-serif;-webkit-text-stroke:0.35px currentColor;">MICHAEL</div>
<div class="t" style="left:441.30px;top:226.09px;font-size:8.75px;color:#111111;font-weight:normal;font-family:'Liberation Sans', sans-serif;-webkit-text-stroke:0.35px currentColor;">L</div>
<div class="t" style="left:496.90px;top:226.09px;font-size:8.75px;color:#111111;font-weight:normal;font-family:'Liberation Sans', sans-serif;-webkit-text-stroke:0.35px currentColor;">THOMPSON</div>
<div class="t" style="left:581.90px;top:226.09px;font-size:8.75px;color:#111111;font-weight:normal;font-family:'Liberation Sans', sans-serif;-webkit-text-stroke:0.35px currentColor;">B01</div>
<div class="t" style="left:655.70px;top:226.09px;font-size:8.75px;color:#111111;font-weight:normal;font-family:'Liberation Sans', sans-serif;-webkit-text-stroke:0.35px currentColor;">3476</div>
<div class="t" style="left:723.10px;top:226.09px;font-size:8.75px;color:#111111;font-weight:normal;font-family:'Liberation Sans', sans-serif;-webkit-text-stroke:0.35px currentColor;">10/10/73</div>
<div class="t" style="left:789.90px;top:226.09px;font-size:8.75px;color:#111111;font-weight:normal;font-family:'Liberation Sans', sans-serif;-webkit-text-stroke:0.35px currentColor;">MANAGER</div>
<div class="t" style="left:861.40px;top:226.09px;font-size:8.75px;color:#111111;font-weight:normal;font-family:'Liberation Sans', sans-serif;-webkit-text-stroke:0.35px currentColor;">18</div>
<div class="t" style="left:923.90px;top:226.09px;font-size:8.75px;color:#111111;font-weight:normal;font-family:'Liberation Sans', sans-serif;-webkit-text-stroke:0.35px currentColor;">M</div>
<div class="t" style="left:964.20px;top:226.09px;font-size:8.75px;color:#111111;font-weight:normal;font-family:'Liberation Sans', sans-serif;-webkit-text-stroke:0.35px currentColor;">02/02/48</div>
<div class="t" style="left:312.70px;top:254.01px;font-size:8.75px;color:#111111;font-weight:normal;font-family:'Liberation Sans', sans-serif;-webkit-text-stroke:0.35px currentColor;">000030</div>
<div class="t" style="left:367.60px;top:254.01px;font-size:8.75px;color:#111111;font-weight:normal;font-family:'Liberation Sans', sans-serif;-webkit-text-stroke:0.35px currentColor;">SALLY</div>
<div class="t" style="left:441.30px;top:254.01px;font-size:8.75px;color:#111111;font-weight:normal;font-family:'Liberation Sans', sans-serif;-webkit-text-stroke:0.35px currentColor;">A</div>
<div class="t" style="left:496.90px;top:254.01px;font-size:8.75px;color:#111111;font-weight:normal;font-family:'Liberation Sans', sans-serif;-webkit-text-stroke:0.35px currentColor;">KWAN</div>
<div class="t" style="left:581.90px;top:254.01px;font-size:8.75px;color:#111111;font-weight:normal;font-family:'Liberation Sans', sans-serif;-webkit-text-stroke:0.35px currentColor;">C01</div>
<div class="t" style="left:655.70px;top:254.01px;font-size:8.75px;color:#111111;font-weight:normal;font-family:'Liberation Sans', sans-serif;-webkit-text-stroke:0.35px currentColor;">4738</div>
<div class="t" style="left:723.10px;top:254.01px;font-size:8.75px;color:#111111;font-weight:normal;font-family:'Liberation Sans', sans-serif;-webkit-text-stroke:0.35px currentColor;">04/05/75</div>
<div class="t" style="left:789.90px;top:254.01px;font-size:8.75px;color:#111111;font-weight:normal;font-family:'Liberation Sans', sans-serif;-webkit-text-stroke:0.35px currentColor;">MANAGER</div>
<div class="t" style="left:861.40px;top:254.01px;font-size:8.75px;color:#111111;font-weight:normal;font-family:'Liberation Sans', sans-serif;-webkit-text-stroke:0.35px currentColor;">20</div>
<div class="t" style="left:923.90px;top:254.01px;font-size:8.75px;color:#111111;font-weight:normal;font-family:'Liberation Sans', sans-serif;-webkit-text-stroke:0.35px currentColor;">F</div>
<div class="t" style="left:964.20px;top:254.01px;font-size:8.75px;color:#111111;font-weight:normal;font-family:'Liberation Sans', sans-serif;-webkit-text-stroke:0.35px currentColor;">05/11/41</div>
<div class="t" style="left:312.70px;top:281.93px;font-size:8.75px;color:#111111;font-weight:normal;font-family:'Liberation Sans', sans-serif;-webkit-text-stroke:0.35px currentColor;">000050</div>
<div class="t" style="left:367.60px;top:281.93px;font-size:8.75px;color:#111111;font-weight:normal;font-family:'Liberation Sans', sans-serif;-webkit-text-stroke:0.35px currentColor;">JOHN</div>
<div class="t" style="left:441.30px;top:281.93px;font-size:8.75px;color:#111111;font-weight:normal;font-family:'Liberation Sans', sans-serif;-webkit-text-stroke:0.35px currentColor;">B</div>
<div class="t" style="left:496.90px;top:281.93px;font-size:8.75px;color:#111111;font-weight:normal;font-family:'Liberation Sans', sans-serif;-webkit-text-stroke:0.35px currentColor;">GEYER</div>
<div class="t" style="left:581.90px;top:281.93px;font-size:8.75px;color:#111111;font-weight:normal;font-family:'Liberation Sans', sans-serif;-webkit-text-stroke:0.35px currentColor;">E01</div>
<div class="t" style="left:655.70px;top:281.93px;font-size:8.75px;color:#111111;font-weight:normal;font-family:'Liberation Sans', sans-serif;-webkit-text-stroke:0.35px currentColor;">6789</div>
<div class="t" style="left:723.10px;top:281.93px;font-size:8.75px;color:#111111;font-weight:normal;font-family:'Liberation Sans', sans-serif;-webkit-text-stroke:0.35px currentColor;">08/17/49</div>
<div class="t" style="left:789.90px;top:281.93px;font-size:8.75px;color:#111111;font-weight:normal;font-family:'Liberation Sans', sans-serif;-webkit-text-stroke:0.35px currentColor;">MANAGER</div>
<div class="t" style="left:861.40px;top:281.93px;font-size:8.75px;color:#111111;font-weight:normal;font-family:'Liberation Sans', sans-serif;-webkit-text-stroke:0.35px currentColor;">16</div>
<div class="t" style="left:923.90px;top:281.93px;font-size:8.75px;color:#111111;font-weight:normal;font-family:'Liberation Sans', sans-serif;-webkit-text-stroke:0.35px currentColor;">M</div>
<div class="t" style="left:964.20px;top:281.93px;font-size:8.75px;color:#111111;font-weight:normal;font-family:'Liberation Sans', sans-serif;-webkit-text-stroke:0.35px currentColor;">null</div>
<div class="t" style="left:312.70px;top:309.85px;font-size:8.75px;color:#111111;font-weight:normal;font-family:'Liberation Sans', sans-serif;-webkit-text-stroke:0.35px currentColor;">000060</div>
<div class="t" style="left:367.60px;top:309.85px;font-size:8.75px;color:#111111;font-weight:normal;font-family:'Liberation Sans', sans-serif;-webkit-text-stroke:0.35px currentColor;">IRVING</div>
<div class="t" style="left:441.30px;top:309.85px;font-size:8.75px;color:#111111;font-weight:normal;font-family:'Liberation Sans', sans-serif;-webkit-text-stroke:0.35px currentColor;">F</div>
<div class="t" style="left:496.90px;top:309.85px;font-size:8.75px;color:#111111;font-weight:normal;font-family:'Liberation Sans', sans-serif;-webkit-text-stroke:0.35px currentColor;">STERN</div>
<div class="t" style="left:581.90px;top:309.85px;font-size:8.75px;color:#111111;font-weight:normal;font-family:'Liberation Sans', sans-serif;-webkit-text-stroke:0.35px currentColor;">D11</div>
<div class="t" style="left:655.70px;top:309.85px;font-size:8.75px;color:#111111;font-weight:normal;font-family:'Liberation Sans', sans-serif;-webkit-text-stroke:0.35px currentColor;">6423</div>
<div class="t" style="left:723.10px;top:309.85px;font-size:8.75px;color:#111111;font-weight:normal;font-family:'Liberation Sans', sans-serif;-webkit-text-stroke:0.35px currentColor;">09/14/73</div>
<div class="t" style="left:789.90px;top:309.85px;font-size:8.75px;color:#111111;font-weight:normal;font-family:'Liberation Sans', sans-serif;-webkit-text-stroke:0.35px currentColor;">MANAGER</div>
<div class="t" style="left:861.40px;top:309.85px;font-size:8.75px;color:#111111;font-weight:normal;font-family:'Liberation Sans', sans-serif;-webkit-text-stroke:0.35px currentColor;">16</div>
<div class="t" style="left:923.90px;top:309.85px;font-size:8.75px;color:#111111;font-weight:normal;font-family:'Liberation Sans', sans-serif;-webkit-text-stroke:0.35px currentColor;">M</div>
<div class="t" style="left:964.20px;top:309.85px;font-size:8.75px;color:#111111;font-weight:normal;font-family:'Liberation Sans', sans-serif;-webkit-text-stroke:0.35px currentColor;">07/07/45</div>
<div class="t" style="left:312.70px;top:337.77px;font-size:8.75px;color:#111111;font-weight:normal;font-family:'Liberation Sans', sans-serif;-webkit-text-stroke:0.35px currentColor;">000070</div>
<div class="t" style="left:367.60px;top:337.77px;font-size:8.75px;color:#111111;font-weight:normal;font-family:'Liberation Sans', sans-serif;-webkit-text-stroke:0.35px currentColor;">EVA</div>
<div class="t" style="left:441.30px;top:337.77px;font-size:8.75px;color:#111111;font-weight:normal;font-family:'Liberation Sans', sans-serif;-webkit-text-stroke:0.35px currentColor;">D</div>
<div class="t" style="left:496.90px;top:337.77px;font-size:8.75px;color:#111111;font-weight:normal;font-family:'Liberation Sans', sans-serif;-webkit-text-stroke:0.35px currentColor;">PULASKI</div>
<div class="t" style="left:581.90px;top:337.77px;font-size:8.75px;color:#111111;font-weight:normal;font-family:'Liberation Sans', sans-serif;-webkit-text-stroke:0.35px currentColor;">D21</div>
<div class="t" style="left:655.70px;top:337.77px;font-size:8.75px;color:#111111;font-weight:normal;font-family:'Liberation Sans', sans-serif;-webkit-text-stroke:0.35px currentColor;">7831</div>
<div class="t" style="left:723.10px;top:337.77px;font-size:8.75px;color:#111111;font-weight:normal;font-family:'Liberation Sans', sans-serif;-webkit-text-stroke:0.35px currentColor;">09/30/80</div>
<div class="t" style="left:789.90px;top:337.77px;font-size:8.75px;color:#111111;font-weight:normal;font-family:'Liberation Sans', sans-serif;-webkit-text-stroke:0.35px currentColor;">MANAGER</div>
<div class="t" style="left:861.40px;top:337.77px;font-size:8.75px;color:#111111;font-weight:normal;font-family:'Liberation Sans', sans-serif;-webkit-text-stroke:0.35px currentColor;">16</div>
<div class="t" style="left:923.90px;top:337.77px;font-size:8.75px;color:#111111;font-weight:normal;font-family:'Liberation Sans', sans-serif;-webkit-text-stroke:0.35px currentColor;">F</div>
<div class="t" style="left:964.20px;top:337.77px;font-size:8.75px;color:#111111;font-weight:normal;font-family:'Liberation Sans', sans-serif;-webkit-text-stroke:0.35px currentColor;">05/26/53</div>
<div class="t" style="left:312.70px;top:365.69px;font-size:8.75px;color:#111111;font-weight:normal;font-family:'Liberation Sans', sans-serif;-webkit-text-stroke:0.35px currentColor;">000090</div>
<div class="t" style="left:367.60px;top:365.69px;font-size:8.75px;color:#111111;font-weight:normal;font-family:'Liberation Sans', sans-serif;-webkit-text-stroke:0.35px currentColor;">EILEEN</div>
<div class="t" style="left:441.30px;top:365.69px;font-size:8.75px;color:#111111;font-weight:normal;font-family:'Liberation Sans', sans-serif;-webkit-text-stroke:0.35px currentColor;">W</div>
<div class="t" style="left:496.90px;top:365.69px;font-size:8.75px;color:#111111;font-weight:normal;font-family:'Liberation Sans', sans-serif;-webkit-text-stroke:0.35px currentColor;">HENDERSON</div>
<div class="t" style="left:581.90px;top:365.69px;font-size:8.75px;color:#111111;font-weight:normal;font-family:'Liberation Sans', sans-serif;-webkit-text-stroke:0.35px currentColor;">E11</div>
<div class="t" style="left:655.70px;top:365.69px;font-size:8.75px;color:#111111;font-weight:normal;font-family:'Liberation Sans', sans-serif;-webkit-text-stroke:0.35px currentColor;">5498</div>
<div class="t" style="left:723.10px;top:365.69px;font-size:8.75px;color:#111111;font-weight:normal;font-family:'Liberation Sans', sans-serif;-webkit-text-stroke:0.35px currentColor;">08/15/70</div>
<div class="t" style="left:789.90px;top:365.69px;font-size:8.75px;color:#111111;font-weight:normal;font-family:'Liberation Sans', sans-serif;-webkit-text-stroke:0.35px currentColor;">MANAGER</div>
<div class="t" style="left:861.40px;top:365.69px;font-size:8.75px;color:#111111;font-weight:normal;font-family:'Liberation Sans', sans-serif;-webkit-text-stroke:0.35px currentColor;">16</div>
<div class="t" style="left:923.90px;top:365.69px;font-size:8.75px;color:#111111;font-weight:normal;font-family:'Liberation Sans', sans-serif;-webkit-text-stroke:0.35px currentColor;">F</div>
<div class="t" style="left:964.20px;top:365.69px;font-size:8.75px;color:#111111;font-weight:normal;font-family:'Liberation Sans', sans-serif;-webkit-text-stroke:0.35px currentColor;">05/15/41</div>
<div class="t" style="left:312.70px;top:393.61px;font-size:8.75px;color:#111111;font-weight:normal;font-family:'Liberation Sans', sans-serif;-webkit-text-stroke:0.35px currentColor;">000100</div>
<div class="t" style="left:367.60px;top:393.61px;font-size:8.75px;color:#111111;font-weight:normal;font-family:'Liberation Sans', sans-serif;-webkit-text-stroke:0.35px currentColor;">THEODORE</div>
<div class="t" style="left:441.30px;top:393.61px;font-size:8.75px;color:#111111;font-weight:normal;font-family:'Liberation Sans', sans-serif;-webkit-text-stroke:0.35px currentColor;">Q</div>
<div class="t" style="left:496.90px;top:393.61px;font-size:8.75px;color:#111111;font-weight:normal;font-family:'Liberation Sans', sans-serif;-webkit-text-stroke:0.35px currentColor;">SPENSER</div>
<div class="t" style="left:581.90px;top:393.61px;font-size:8.75px;color:#111111;font-weight:normal;font-family:'Liberation Sans', sans-serif;-webkit-text-stroke:0.35px currentColor;">E21</div>
<div class="t" style="left:655.70px;top:393.61px;font-size:8.75px;color:#111111;font-weight:normal;font-family:'Liberation Sans', sans-serif;-webkit-text-stroke:0.35px currentColor;">0972</div>
<div class="t" style="left:723.10px;top:393.61px;font-size:8.75px;color:#111111;font-weight:normal;font-family:'Liberation Sans', sans-serif;-webkit-text-stroke:0.35px currentColor;">06/19/80</div>
<div class="t" style="left:789.90px;top:393.61px;font-size:8.75px;color:#111111;font-weight:normal;font-family:'Liberation Sans', sans-serif;-webkit-text-stroke:0.35px currentColor;">MANAGER</div>
<div class="t" style="left:861.40px;top:393.61px;font-size:8.75px;color:#111111;font-weight:normal;font-family:'Liberation Sans', sans-serif;-webkit-text-stroke:0.35px currentColor;">14</div>
<div class="t" style="left:923.90px;top:393.61px;font-size:8.75px;color:#111111;font-weight:normal;font-family:'Liberation Sans', sans-serif;-webkit-text-stroke:0.35px currentColor;">M</div>
<div class="t" style="left:964.20px;top:393.61px;font-size:8.75px;color:#111111;font-weight:normal;font-family:'Liberation Sans', sans-serif;-webkit-text-stroke:0.35px currentColor;">12/18/56</div>
<div class="t" style="left:312.70px;top:421.53px;font-size:8.75px;color:#111111;font-weight:normal;font-family:'Liberation Sans', sans-serif;-webkit-text-stroke:0.35px currentColor;">000110</div>
<div class="t" style="left:367.60px;top:421.53px;font-size:8.75px;color:#111111;font-weight:normal;font-family:'Liberation Sans', sans-serif;-webkit-text-stroke:0.35px currentColor;">VINCENZO</div>
<div class="t" style="left:441.30px;top:421.53px;font-size:8.75px;color:#111111;font-weight:normal;font-family:'Liberation Sans', sans-serif;-webkit-text-stroke:0.35px currentColor;">W</div>
<div class="t" style="left:496.90px;top:421.53px;font-size:8.75px;color:#111111;font-weight:normal;font-family:'Liberation Sans', sans-serif;-webkit-text-stroke:0.35px currentColor;">LUCCHESSI</div>
<div class="t" style="left:581.90px;top:421.53px;font-size:8.75px;color:#111111;font-weight:normal;font-family:'Liberation Sans', sans-serif;-webkit-text-stroke:0.35px currentColor;">A00</div>
<div class="t" style="left:655.70px;top:421.53px;font-size:8.75px;color:#111111;font-weight:normal;font-family:'Liberation Sans', sans-serif;-webkit-text-stroke:0.35px currentColor;">3490</div>
<div class="t" style="left:723.10px;top:421.53px;font-size:8.75px;color:#111111;font-weight:normal;font-family:'Liberation Sans', sans-serif;-webkit-text-stroke:0.35px currentColor;">05/16/58</div>
<div class="t" style="left:789.90px;top:421.53px;font-size:8.75px;color:#111111;font-weight:normal;font-family:'Liberation Sans', sans-serif;-webkit-text-stroke:0.35px currentColor;">SALESREP</div>
<div class="t" style="left:861.40px;top:421.53px;font-size:8.75px;color:#111111;font-weight:normal;font-family:'Liberation Sans', sans-serif;-webkit-text-stroke:0.35px currentColor;">19</div>
<div class="t" style="left:923.90px;top:421.53px;font-size:8.75px;color:#111111;font-weight:normal;font-family:'Liberation Sans', sans-serif;-webkit-text-stroke:0.35px currentColor;">M</div>
<div class="t" style="left:964.20px;top:421.53px;font-size:8.75px;color:#111111;font-weight:normal;font-family:'Liberation Sans', sans-serif;-webkit-text-stroke:0.35px currentColor;">null</div>
<div class="t" style="left:312.70px;top:449.45px;font-size:8.75px;color:#111111;font-weight:normal;font-family:'Liberation Sans', sans-serif;-webkit-text-stroke:0.35px currentColor;">000120</div>
<div class="t" style="left:367.60px;top:449.45px;font-size:8.75px;color:#111111;font-weight:normal;font-family:'Liberation Sans', sans-serif;-webkit-text-stroke:0.35px currentColor;">SEAN</div>
<div class="t" style="left:496.90px;top:449.45px;font-size:8.75px;color:#111111;font-weight:normal;font-family:'Liberation Sans', sans-serif;-webkit-text-stroke:0.35px currentColor;">O'CONNELL</div>
<div class="t" style="left:581.90px;top:449.45px;font-size:8.75px;color:#111111;font-weight:normal;font-family:'Liberation Sans', sans-serif;-webkit-text-stroke:0.35px currentColor;">A00</div>
<div class="t" style="left:655.70px;top:449.45px;font-size:8.75px;color:#111111;font-weight:normal;font-family:'Liberation Sans', sans-serif;-webkit-text-stroke:0.35px currentColor;">2167</div>
<div class="t" style="left:723.10px;top:449.45px;font-size:8.75px;color:#111111;font-weight:normal;font-family:'Liberation Sans', sans-serif;-webkit-text-stroke:0.35px currentColor;">12/05/63</div>
<div class="t" style="left:789.90px;top:449.45px;font-size:8.75px;color:#111111;font-weight:normal;font-family:'Liberation Sans', sans-serif;-webkit-text-stroke:0.35px currentColor;">CLERK</div>
<div class="t" style="left:861.40px;top:449.45px;font-size:8.75px;color:#111111;font-weight:normal;font-family:'Liberation Sans', sans-serif;-webkit-text-stroke:0.35px currentColor;">14</div>
<div class="t" style="left:923.90px;top:449.45px;font-size:8.75px;color:#111111;font-weight:normal;font-family:'Liberation Sans', sans-serif;-webkit-text-stroke:0.35px currentColor;">M</div>
<div class="t" style="left:964.20px;top:449.45px;font-size:8.75px;color:#111111;font-weight:normal;font-family:'Liberation Sans', sans-serif;-webkit-text-stroke:0.35px currentColor;">10/18/42</div>
<div class="t" style="left:312.70px;top:477.37px;font-size:8.75px;color:#111111;font-weight:normal;font-family:'Liberation Sans', sans-serif;-webkit-text-stroke:0.35px currentColor;">000130</div>
<div class="t" style="left:367.60px;top:477.37px;font-size:8.75px;color:#111111;font-weight:normal;font-family:'Liberation Sans', sans-serif;-webkit-text-stroke:0.35px currentColor;">DELORES</div>
<div class="t" style="left:441.30px;top:477.37px;font-size:8.75px;color:#111111;font-weight:normal;font-family:'Liberation Sans', sans-serif;-webkit-text-stroke:0.35px currentColor;">M</div>
<div class="t" style="left:496.90px;top:477.37px;font-size:8.75px;color:#111111;font-weight:normal;font-family:'Liberation Sans', sans-serif;-webkit-text-stroke:0.35px currentColor;">QUINTANA</div>
<div class="t" style="left:581.90px;top:477.37px;font-size:8.75px;color:#111111;font-weight:normal;font-family:'Liberation Sans', sans-serif;-webkit-text-stroke:0.35px currentColor;">C01</div>
<div class="t" style="left:655.70px;top:477.37px;font-size:8.75px;color:#111111;font-weight:normal;font-family:'Liberation Sans', sans-serif;-webkit-text-stroke:0.35px currentColor;">4578</div>
<div class="t" style="left:723.10px;top:477.37px;font-size:8.75px;color:#111111;font-weight:normal;font-family:'Liberation Sans', sans-serif;-webkit-text-stroke:0.35px currentColor;">07/28/71</div>
<div class="t" style="left:789.90px;top:477.37px;font-size:8.75px;color:#111111;font-weight:normal;font-family:'Liberation Sans', sans-serif;-webkit-text-stroke:0.35px currentColor;">ANALYST</div>
<div class="t" style="left:861.40px;top:477.37px;font-size:8.75px;color:#111111;font-weight:normal;font-family:'Liberation Sans', sans-serif;-webkit-text-stroke:0.35px currentColor;">16</div>
<div class="t" style="left:923.90px;top:477.37px;font-size:8.75px;color:#111111;font-weight:normal;font-family:'Liberation Sans', sans-serif;-webkit-text-stroke:0.35px currentColor;">F</div>
<div class="t" style="left:964.20px;top:477.37px;font-size:8.75px;color:#111111;font-weight:normal;font-family:'Liberation Sans', sans-serif;-webkit-text-stroke:0.35px currentColor;">null</div>
<div class="t" style="left:312.70px;top:505.29px;font-size:8.75px;color:#111111;font-weight:normal;font-family:'Liberation Sans', sans-serif;-webkit-text-stroke:0.35px currentColor;">000140</div>
<div class="t" style="left:367.60px;top:505.29px;font-size:8.75px;color:#111111;font-weight:normal;font-family:'Liberation Sans', sans-serif;-webkit-text-stroke:0.35px currentColor;">HEATHER</div>
<div class="t" style="left:441.30px;top:505.29px;font-size:8.75px;color:#111111;font-weight:normal;font-family:'Liberation Sans', sans-serif;-webkit-text-stroke:0.35px currentColor;">A</div>
<div class="t" style="left:496.90px;top:505.29px;font-size:8.75px;color:#111111;font-weight:normal;font-family:'Liberation Sans', sans-serif;-webkit-text-stroke:0.35px currentColor;">NICHOLLS</div>
<div class="t" style="left:581.90px;top:505.29px;font-size:8.75px;color:#111111;font-weight:normal;font-family:'Liberation Sans', sans-serif;-webkit-text-stroke:0.35px currentColor;">C01</div>
<div class="t" style="left:655.70px;top:505.29px;font-size:8.75px;color:#111111;font-weight:normal;font-family:'Liberation Sans', sans-serif;-webkit-text-stroke:0.35px currentColor;">1793</div>
<div class="t" style="left:723.10px;top:505.29px;font-size:8.75px;color:#111111;font-weight:normal;font-family:'Liberation Sans', sans-serif;-webkit-text-stroke:0.35px currentColor;">12/15/76</div>
<div class="t" style="left:789.90px;top:505.29px;font-size:8.75px;color:#111111;font-weight:normal;font-family:'Liberation Sans', sans-serif;-webkit-text-stroke:0.35px currentColor;">ANALYST</div>
<div class="t" style="left:861.40px;top:505.29px;font-size:8.75px;color:#111111;font-weight:normal;font-family:'Liberation Sans', sans-serif;-webkit-text-stroke:0.35px currentColor;">18</div>
<div class="t" style="left:923.90px;top:505.29px;font-size:8.75px;color:#111111;font-weight:normal;font-family:'Liberation Sans', sans-serif;-webkit-text-stroke:0.35px currentColor;">F</div>
<div class="t" style="left:964.20px;top:505.29px;font-size:8.75px;color:#111111;font-weight:normal;font-family:'Liberation Sans', sans-serif;-webkit-text-stroke:0.35px currentColor;">01/19/46</div>
<div class="t" style="left:312.70px;top:533.21px;font-size:8.75px;color:#111111;font-weight:normal;font-family:'Liberation Sans', sans-serif;-webkit-text-stroke:0.35px currentColor;">000150</div>
<div class="t" style="left:367.60px;top:533.21px;font-size:8.75px;color:#111111;font-weight:normal;font-family:'Liberation Sans', sans-serif;-webkit-text-stroke:0.35px currentColor;">BRUCE</div>
<div class="t" style="left:496.90px;top:533.21px;font-size:8.75px;color:#111111;font-weight:normal;font-family:'Liberation Sans', sans-serif;-webkit-text-stroke:0.35px currentColor;">ADAMSON</div>
<div class="t" style="left:581.90px;top:533.21px;font-size:8.75px;color:#111111;font-weight:normal;font-family:'Liberation Sans', sans-serif;-webkit-text-stroke:0.35px currentColor;">D11</div>
<div class="t" style="left:655.70px;top:533.21px;font-size:8.75px;color:#111111;font-weight:normal;font-family:'Liberation Sans', sans-serif;-webkit-text-stroke:0.35px currentColor;">4510</div>
<div class="t" style="left:723.10px;top:533.21px;font-size:8.75px;color:#111111;font-weight:normal;font-family:'Liberation Sans', sans-serif;-webkit-text-stroke:0.35px currentColor;">02/12/72</div>
<div class="t" style="left:789.90px;top:533.21px;font-size:8.75px;color:#111111;font-weight:normal;font-family:'Liberation Sans', sans-serif;-webkit-text-stroke:0.35px currentColor;">DESIGNER</div>
<div class="t" style="left:861.40px;top:533.21px;font-size:8.75px;color:#111111;font-weight:normal;font-family:'Liberation Sans', sans-serif;-webkit-text-stroke:0.35px currentColor;">16</div>
<div class="t" style="left:923.90px;top:533.21px;font-size:8.75px;color:#111111;font-weight:normal;font-family:'Liberation Sans', sans-serif;-webkit-text-stroke:0.35px currentColor;">M</div>
<div class="t" style="left:964.20px;top:533.21px;font-size:8.75px;color:#111111;font-weight:normal;font-family:'Liberation Sans', sans-serif;-webkit-text-stroke:0.35px currentColor;">05/17/47</div>
<div class="t" style="left:312.70px;top:561.13px;font-size:8.75px;color:#111111;font-weight:normal;font-family:'Liberation Sans', sans-serif;-webkit-text-stroke:0.35px currentColor;">000160</div>
<div class="t" style="left:367.60px;top:561.13px;font-size:8.75px;color:#111111;font-weight:normal;font-family:'Liberation Sans', sans-serif;-webkit-text-stroke:0.35px currentColor;">ELIZABETH</div>
<div class="t" style="left:441.30px;top:561.13px;font-size:8.75px;color:#111111;font-weight:normal;font-family:'Liberation Sans', sans-serif;-webkit-text-stroke:0.35px currentColor;">R</div>
<div class="t" style="left:496.90px;top:561.13px;font-size:8.75px;color:#111111;font-weight:normal;font-family:'Liberation Sans', sans-serif;-webkit-text-stroke:0.35px currentColor;">PIANKA</div>
<div class="t" style="left:581.90px;top:561.13px;font-size:8.75px;color:#111111;font-weight:normal;font-family:'Liberation Sans', sans-serif;-webkit-text-stroke:0.35px currentColor;">D11</div>
<div class="t" style="left:655.70px;top:561.13px;font-size:8.75px;color:#111111;font-weight:normal;font-family:'Liberation Sans', sans-serif;-webkit-text-stroke:0.35px currentColor;">3782</div>
<div class="t" style="left:723.10px;top:561.13px;font-size:8.75px;color:#111111;font-weight:normal;font-family:'Liberation Sans', sans-serif;-webkit-text-stroke:0.35px currentColor;">10/11/77</div>
<div class="t" style="left:789.90px;top:561.13px;font-size:8.75px;color:#111111;font-weight:normal;font-family:'Liberation Sans', sans-serif;-webkit-text-stroke:0.35px currentColor;">DESIGNER</div>
<div class="t" style="left:861.40px;top:561.13px;font-size:8.75px;color:#111111;font-weight:normal;font-family:'Liberation Sans', sans-serif;-webkit-text-stroke:0.35px currentColor;">17</div>
<div class="t" style="left:923.90px;top:561.13px;font-size:8.75px;color:#111111;font-weight:normal;font-family:'Liberation Sans', sans-serif;-webkit-text-stroke:0.35px currentColor;">F</div>
<div class="t" style="left:964.20px;top:561.13px;font-size:8.75px;color:#111111;font-weight:normal;font-family:'Liberation Sans', sans-serif;-webkit-text-stroke:0.35px currentColor;">04/12/55</div>
</div>
<div class="r" style="left:1002.40px;top:156.00px;width:6.90px;height:144.50px;background:#c1c1c1;"></div>
<div class="r" style="left:286.10px;top:578.00px;width:568.90px;height:6.80px;background:#c1c1c1;"></div>
<div class="r" style="left:2.00px;top:584.80px;width:1007.30px;height:17.20px;background:#2b79d1;"></div>
<div class="r" style="left:2.00px;top:584.80px;width:26.20px;height:17.20px;background:#2c8a5a;"></div>
<svg class="r" style="left:8px;top:584px;" width="16" height="17" viewBox="8 584 16 17"><path d="M12.4 591.9 L15.1 594.7 L12.4 597.5 M18.5 588.7 L15.8 591.5 L18.5 594.3" fill="none" stroke="#d6efdf" stroke-width="1.1" stroke-linecap="round" stroke-linejoin="round"/></svg>
<svg class="r" style="left:30px;top:584px;" width="15" height="17" viewBox="30 584 15 17"><circle cx="35.3" cy="589.6" r="1.5" fill="none" stroke="#ffffff" stroke-width="1" stroke-linecap="round" stroke-linejoin="round"/><circle cx="35.3" cy="596.9" r="1.5" fill="none" stroke="#ffffff" stroke-width="1" stroke-linecap="round" stroke-linejoin="round"/><circle cx="40.6" cy="591.6" r="1.5" fill="none" stroke="#ffffff" stroke-width="1" stroke-linecap="round" stroke-linejoin="round"/><path d="M35.3 591.1 V595.4 M40.6 593.1 Q40.6 595 36.4 595.9" fill="none" stroke="#ffffff" stroke-width="1" stroke-linecap="round" stroke-linejoin="round"/></svg>
<div class="t" style="left:45.47px;top:593.87px;font-size:9.6px;color:#ffffff;font-weight:normal;font-family:'Liberation Sans', sans-serif;-webkit-text-stroke:0.12px currentColor;transform:scaleX(1.0033);transform-origin:0 0;">main</div>
<svg class="r" style="left:66px;top:584px;" width="5" height="17" viewBox="66 584 5 17"><circle cx="68.4" cy="592.1" r="1.15" fill="#fff"/></svg>
<svg class="r" style="left:72px;top:584px;" width="16" height="17" viewBox="72 584 16 17"><path d="M76.2 592.6 A4.2 4.2 0 0 1 84 592 M84.4 595 A4.2 4.2 0 0 1 76.6 595.6" fill="none" stroke="#ffffff" stroke-width="1" stroke-linecap="round" stroke-linejoin="round"/><path d="M84.6 589.9 L84.2 592.3 L81.9 591.9 M76 597.7 L76.4 595.3 L78.7 595.7" fill="none" stroke="#ffffff" stroke-width="1" stroke-linecap="round" stroke-linejoin="round"/></svg>
<svg class="r" style="left:94px;top:584px;" width="14" height="17" viewBox="94 584 14 17"><circle cx="98.3" cy="589.8" r="1.4" fill="none" stroke="#ffffff" stroke-width="1" stroke-linecap="round" stroke-linejoin="round"/><circle cx="98.3" cy="597" r="1.4" fill="none" stroke="#ffffff" stroke-width="1" stroke-linecap="round" stroke-linejoin="round"/><circle cx="103.6" cy="594.6" r="1.4" fill="none" stroke="#ffffff" stroke-width="1" stroke-linecap="round" stroke-linejoin="round"/><path d="M98.3 591.2 V595.6 M103.6 593.2 Q103.6 591.2 100.6 590.6 M100.2 589.6 L101 590.7 L100 591.8" fill="none" stroke="#ffffff" stroke-width="1" stroke-linecap="round" stroke-linejoin="round"/></svg>
<svg class="r" style="left:118px;top:584px;" width="12" height="17" viewBox="118 584 12 17"><circle cx="124.1" cy="593.9" r="4.3" fill="none" stroke="#ffffff" stroke-width="1" stroke-linecap="round" stroke-linejoin="round"/><path d="M122.4 592.2 L125.8 595.6 M125.8 592.2 L122.4 595.6" fill="none" stroke="#ffffff" stroke-width="1" stroke-linecap="round" stroke-linejoin="round"/></svg>
<div class="t" style="left:131.77px;top:593.77px;font-size:9.6px;color:#ffffff;font-weight:normal;font-family:'Liberation Sans', sans-serif;-webkit-text-stroke:0.12px currentColor;transform:scaleX(1.1068);transform-origin:0 0;">0</div>
<svg class="r" style="left:139px;top:584px;" width="13" height="17" viewBox="139 584 13 17"><path d="M145.45 589.3 L149.9 597.4 H141 Z" fill="none" stroke="#ffffff" stroke-width="1" stroke-linecap="round" stroke-linejoin="round"/><path d="M145.45 592.2 V595 M145.45 596.2 V596.3" fill="none" stroke="#ffffff" stroke-width="1" stroke-linecap="round" stroke-linejoin="round"/></svg>
<div class="t" style="left:153.53px;top:593.77px;font-size:9.6px;color:#ffffff;font-weight:normal;font-family:'Liberation Sans', sans-serif;-webkit-text-stroke:0.12px currentColor;transform:scaleX(0.9766);transform-origin:0 0;">0</div>
<svg class="r" style="left:170px;top:584px;" width="12" height="17" viewBox="170 584 12 17"><path d="M172.8 597 L174.9 594.9 M175.8 592.2 L177.9 594.3 M176.9 591.2 L179 589.1" fill="none" stroke="#ffffff" stroke-width="1" stroke-linecap="round" stroke-linejoin="round"/><path d="M173.9 592.9 L176.8 595.8 Q175.8 597.4 174.4 596.3 L173.3 595.2 Q172.2 593.9 173.9 592.9 Z M177.2 590.4 L178.8 592 Q180.6 590.5 179.6 589.6 Q178.6 588.7 177.2 590.4 Z" fill="none" stroke="#ffffff" stroke-width="1" stroke-linecap="round" stroke-linejoin="round"/></svg>
<svg class="r" style="left:192px;top:584px;" width="14" height="17" viewBox="192 584 14 17"><polygon points="202.43,594.34 203.32,595.51 202.86,596.38 201.39,596.29 200.81,596.76 200.61,598.22 199.68,598.50 198.70,597.40 197.96,597.33 196.79,598.22 195.92,597.76 196.01,596.29 195.54,595.71 194.08,595.51 193.80,594.58 194.90,593.60 194.97,592.86 194.08,591.69 194.54,590.82 196.01,590.91 196.59,590.44 196.79,588.98 197.72,588.70 198.70,589.80 199.44,589.87 200.61,588.98 201.48,589.44 201.39,590.91 201.86,591.49 203.32,591.69 203.60,592.62 202.50,593.60" fill="none" stroke="#ffffff" stroke-width="1" stroke-linecap="round" stroke-linejoin="round"/><circle cx="198.7" cy="593.6" r="1.3" fill="none" stroke="#ffffff" stroke-width="1" stroke-linecap="round" stroke-linejoin="round"/></svg>
<div class="t" style="left:206.51px;top:593.87px;font-size:9.6px;color:#ffffff;font-weight:normal;font-family:'Liberation Sans', sans-serif;-webkit-text-stroke:0.12px currentColor;transform:scaleX(1.0158);transform-origin:0 0;">oss73dev</div>
<svg class="r" style="left:259px;top:584px;" width="14" height="17" viewBox="259 584 14 17"><path d="M261.3 591.5 V589.6 H264.3 L265.2 590.5 H270.7 V597.7 H268.3" fill="none" stroke="#ffffff" stroke-width="1" stroke-linecap="round" stroke-linejoin="round"/><circle cx="263.6" cy="595.2" r="2" fill="none" stroke="#ffffff" stroke-width="1" stroke-linecap="round" stroke-linejoin="round"/><circle cx="263.6" cy="595.2" r="0.6" fill="#fff"/></svg>
<div class="t" style="left:273.43px;top:593.87px;font-size:9.6px;color:#ffffff;font-weight:normal;font-family:'Liberation Sans', sans-serif;-webkit-text-stroke:0.12px currentColor;transform:scaleX(1.0076);transform-origin:0 0;">Project:</div>
<svg class="r" style="left:308px;top:584px;" width="13" height="17" viewBox="308 584 13 17"><circle cx="314.6" cy="593.8" r="4.5" fill="none" stroke="#ffffff" stroke-width="1" stroke-linecap="round" stroke-linejoin="round"/><path d="M311.5 596.9 L317.7 590.7" fill="none" stroke="#ffffff" stroke-width="1" stroke-linecap="round" stroke-linejoin="round"/></svg>
<svg class="r" style="left:331px;top:584px;" width="13" height="17" viewBox="331 584 13 17"><path d="M333.3 591.1 H341.5 M333.3 593.9 H341.5 M333.3 596.7 H341.5" stroke="#fff" stroke-width="1.15"/></svg>
<div class="t" style="left:345.16px;top:593.87px;font-size:9.6px;color:#ffffff;font-weight:normal;font-family:'Liberation Sans', sans-serif;-webkit-text-stroke:0.12px currentColor;transform:scaleX(1.0240);transform-origin:0 0;">Output</div>
<svg class="r" style="left:385px;top:584px;" width="14" height="17" viewBox="385 584 14 17"><path d="M389.8 596.4 H389.6 A2.1 2.1 0 0 1 389.2 592.3 A3.1 3.1 0 0 1 395 591.9 A2.2 2.2 0 0 1 395.2 596.4 H394.6" fill="none" stroke="#ffffff" stroke-width="1" stroke-linecap="round" stroke-linejoin="round"/><path d="M392.2 597.6 V593.6 M390.8 595 L392.2 593.6 L393.6 595" fill="none" stroke="#ffffff" stroke-width="1" stroke-linecap="round" stroke-linejoin="round"/></svg>
<div class="t" style="left:399.94px;top:593.87px;font-size:9.6px;color:#ffffff;font-weight:normal;font-family:'Liberation Sans', sans-serif;-webkit-text-stroke:0.12px currentColor;transform:scaleX(0.9885);transform-origin:0 0;">Deploy</div>
<svg class="r" style="left:441px;top:584px;" width="12" height="17" viewBox="441 584 12 17"><ellipse cx="447.2" cy="590.9" rx="3.5" ry="1.4" fill="none" stroke="#ffffff" stroke-width="1" stroke-linecap="round" stroke-linejoin="round"/><path d="M443.7 590.9 V596.6 Q443.7 598 447.2 598 Q450.7 598 450.7 596.6 V590.9" fill="none" stroke="#ffffff" stroke-width="1" stroke-linecap="round" stroke-linejoin="round"/></svg>
<div class="t" style="left:454.86px;top:593.87px;font-size:9.6px;color:#ffffff;font-weight:normal;font-family:'Liberation Sans', sans-serif;-webkit-text-stroke:0.12px currentColor;transform:scaleX(1.0119);transform-origin:0 0;">SQL naming stuff 2</div>
<div class="t" style="left:609.71px;top:593.87px;font-size:9.6px;color:#ffffff;font-weight:normal;font-family:'Liberation Sans', sans-serif;-webkit-text-stroke:0.12px currentColor;transform:scaleX(1.0223);transform-origin:0 0;">Ln 1, Col 35 (34 selected)</div>
<div class="t" style="left:734.17px;top:593.87px;font-size:9.6px;color:#ffffff;font-weight:normal;font-family:'Liberation Sans', sans-serif;-webkit-text-stroke:0.12px currentColor;transform:scaleX(0.9938);transform-origin:0 0;">Spaces: 2</div>
<div class="t" style="left:788.25px;top:593.87px;font-size:9.6px;color:#ffffff;font-weight:normal;font-family:'Liberation Sans', sans-serif;-webkit-text-stroke:0.12px currentColor;transform:scaleX(1.0474);transform-origin:0 0;">UTF-8</div>
<div class="t" style="left:827.79px;top:593.87px;font-size:9.6px;color:#ffffff;font-weight:normal;font-family:'Liberation Sans', sans-serif;-webkit-text-stroke:0.12px currentColor;transform:scaleX(0.9270);transform-origin:0 0;">LF</div>
<div class="t" style="left:850.88px;top:593.96px;font-size:10.5px;color:#ffffff;font-weight:normal;font-family:'Liberation Sans', sans-serif;-webkit-text-stroke:0.05px currentColor;transform:scaleX(0.7619);transform-origin:0 0;">{</div>
<div class="t" style="left:855.88px;top:593.96px;font-size:10.5px;color:#ffffff;font-weight:normal;font-family:'Liberation Sans', sans-serif;-webkit-text-stroke:0.05px currentColor;transform:scaleX(0.7619);transform-origin:0 0;">}</div>
<div class="t" style="left:864.18px;top:593.87px;font-size:9.6px;color:#ffffff;font-weight:normal;font-family:'Liberation Sans', sans-serif;-webkit-text-stroke:0.12px currentColor;transform:scaleX(1.1211);transform-origin:0 0;">sql</div>
<svg class="r" style="left:886px;top:584px;" width="14" height="17" viewBox="886 584 14 17"><path d="M889 592.6 A4.6 4.6 0 1 0 890.4 590.4" fill="none" stroke="#ffffff" stroke-width="1" stroke-linecap="round" stroke-linejoin="round"/><path d="M888.9 589.2 V591.6 H891.3 M893.3 591.6 V594.4 L895.2 596" fill="none" stroke="#ffffff" stroke-width="1" stroke-linecap="round" stroke-linejoin="round"/></svg>
<div class="t" style="left:899.83px;top:593.87px;font-size:9.6px;color:#ffffff;font-weight:normal;font-family:'Liberation Sans', sans-serif;-webkit-text-stroke:0.12px currentColor;transform:scaleX(0.9984);transform-origin:0 0;">Date Search</div>
<svg class="r" style="left:963px;top:584px;" width="14" height="17" viewBox="963 584 14 17"><circle cx="967.8" cy="593.4" r="1.8" fill="none" stroke="#ffffff" stroke-width="1" stroke-linecap="round" stroke-linejoin="round"/><path d="M965.1 598.2 Q965.5 595.6 967.8 595.6 Q970.1 595.6 970.5 598.2 M970 589.3 H975.3 V593.6 H972.3 L971 595" fill="none" stroke="#ffffff" stroke-width="1" stroke-linecap="round" stroke-linejoin="round"/></svg>
<svg class="r" style="left:987px;top:584px;" width="12" height="17" viewBox="987 584 12 17"><path d="M989 596.4 H997.4 L996.1 594.8 V592.5 A2.9 2.9 0 0 0 990.3 592.5 V594.8 Z M992 597.6 Q993.2 598.6 994.4 597.6" fill="none" stroke="#ffffff" stroke-width="1" stroke-linecap="round" stroke-linejoin="round"/></svg>
<div class="r" style="left:1.5px;top:1.5px;width:1008.3px;height:601px;border-radius:7px;box-shadow:0 0 0 30px #dedede;border:0.8px solid;border-color:#757575 #a5a5a5 #8a8a8a #757575;box-sizing:border-box;pointer-events:none;"></div>
<div class="r" style="left:8.00px;top:0.00px;width:995.00px;height:1.00px;background:#e6e6e6;"></div>
<div class="r" style="left:8.00px;top:1.00px;width:995.00px;height:0.50px;background:#f2f2f2;"></div>
<div class="r" style="left:0.00px;top:10.00px;width:1.60px;height:585.00px;background:#c8c8c8;"></div>
<div class="r" style="left:1009.60px;top:10.00px;width:1.40px;height:585.00px;background:#b8b8b8;"></div>
<div class="r" style="left:1.60px;top:277.90px;width:2.40px;height:35.80px;background:#d8d8d8;"></div>
</div></body></html>
